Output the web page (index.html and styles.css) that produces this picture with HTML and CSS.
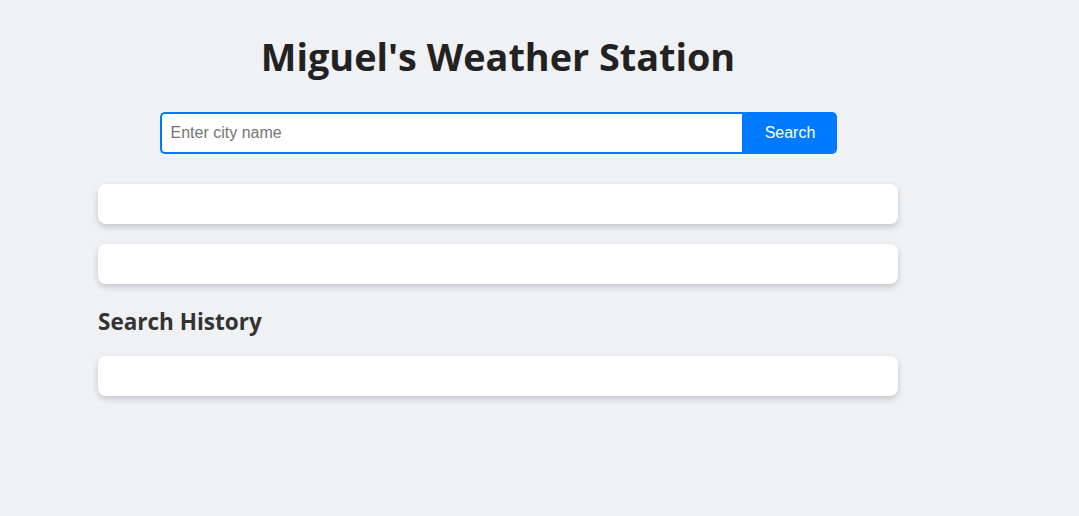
FILE: index.html
```html
<!DOCTYPE html>
<html lang="en">
<head>
<meta charset="utf-8">
<title>Miguel's Weather Station</title>
<link rel="stylesheet" href="styles.css">
</head>
<body>
<main class="page">
  <h1 class="title">Miguel's Weather Station</h1>
  <form class="search">
    <input class="search-input" type="text" placeholder="Enter city name">
    <button class="search-btn" type="button">Search</button>
  </form>
  <section class="card"></section>
  <section class="card"></section>
  <h2 class="history-title">Search History</h2>
  <section class="card"></section>
</main>
</body>
</html>
```
FILE: styles.css
```css
html, body {
  margin: 0;
  padding: 0;
  background: #f0f1f5;
}
body {
  font-family: "Open Sans", "Noto Sans", sans-serif;
  color: #333;
}
.page {
  width: 800px;
  margin-left: 98px;
  padding-top: 32px;
  display: flex;
  flex-direction: column;
}
.title {
  margin: 0;
  text-align: center;
  font-size: 37.8px;
  line-height: 50px;
  font-weight: 700;
  color: #222;
}
.search {
  display: flex;
  width: 677px;
  height: 42px;
  margin: 30px auto 30px;
}
.search-input {
  flex: 1;
  box-sizing: border-box;
  height: 42px;
  border: 2px solid #007bff;
  border-right: none;
  border-radius: 5px 0 0 5px;
  padding: 0 9px;
  font-family: "Liberation Sans", Arial, sans-serif;
  font-size: 16px;
  outline: none;
  background: #fff;
}
.search-input::placeholder {
  color: #757575;
}
.search-btn {
  width: 95px;
  height: 42px;
  border: none;
  border-radius: 0 5px 5px 0;
  background: #007bff;
  color: #fff;
  font-family: "Liberation Sans", Arial, sans-serif;
  font-size: 16px;
  padding: 0 0 0 2px;
  cursor: pointer;
}
.card {
  height: 40px;
  background: #fff;
  border-radius: 8px;
  box-shadow: 0 3px 6px rgba(0, 0, 0, 0.18);
  margin-bottom: 20px;
}
.history-title {
  margin: 3px 0 19px;
  font-size: 22.5px;
  line-height: 30px;
  font-weight: 700;
  color: #333;
}
```
